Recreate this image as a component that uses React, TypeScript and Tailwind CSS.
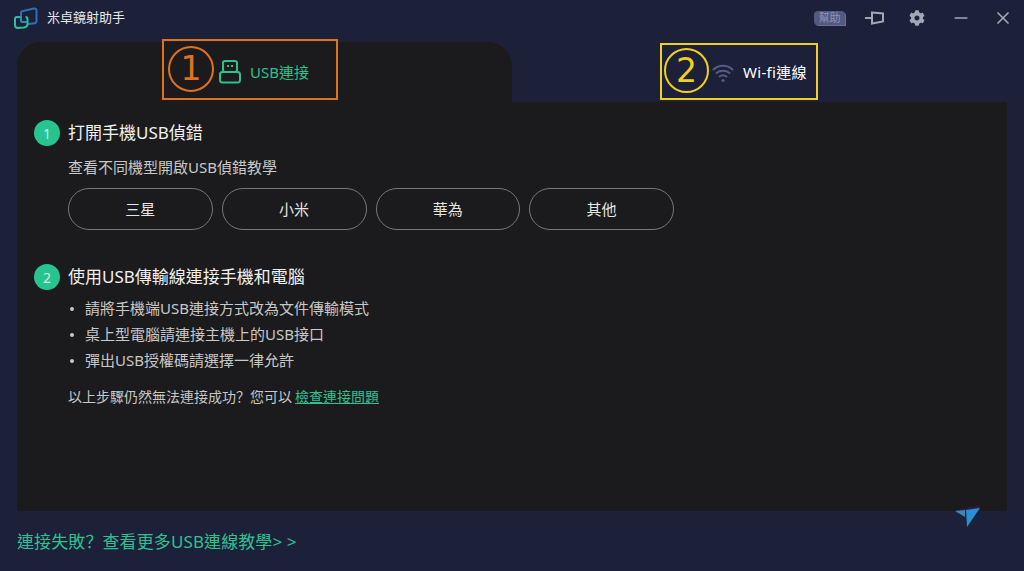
import React from 'react'
import { Minus, X } from 'lucide-react'
import { FaCog } from 'react-icons/fa'

const font = { fontFamily: '"Noto Sans", "Noto Sans CJK TC", sans-serif' }

const brands = ['三星', '小米', '華為', '其他']
const tips = ['請將手機端USB連接方式改為文件傳輸模式', '桌上型電腦請連接主機上的USB接口', '彈出USB授權碼請選擇一律允許']

const StepBadge = ({ n }: { n: number }) => (
  <span className="flex h-[26px] w-[26px] shrink-0 items-center justify-center rounded-full bg-[#27c48f] text-[14px] text-[#cfeee2]">
    {n}
  </span>
)

const Logo = () => (
  <svg width="26" height="22" viewBox="0 0 26 22" fill="none" strokeWidth="2">
    <path d="M8 9V5.5Q8 4.5 9 4.3L21 1.5Q23.5 1.2 23.5 3.5V14Q23.5 16 21.5 16.2L15 17" stroke="#2f6fb8" />
    <path d="M7 10H4Q2 10 2 12V18Q2 21 5 21L11 20.5Q14.5 20 14.5 17V12Q14.5 10 12.5 10" stroke="#2bc0a0" />
    <path d="M8 9V13.5Q8 15 9.5 15H14" stroke="#2b90b0" />
  </svg>
)

const UsbIcon = () => (
  <svg width="22" height="24" viewBox="0 0 22 24" fill="none" stroke="#2fc08e" strokeWidth="2">
    <rect x="4" y="1" width="14" height="11" rx="2" />
    <rect x="1" y="12" width="20" height="10.5" rx="2.5" />
    <path d="M8 6h2M12 6h2" />
  </svg>
)

const WifiIcon = () => (
  <svg width="22" height="22" viewBox="0 0 22 22" fill="none" stroke="#555c85" strokeWidth="2" strokeLinecap="round">
    <path d="M1.5 7.5C7 2.5 15 2.5 20.5 7.5" />
    <path d="M4.5 11C8 8 14 8 17.5 11" />
    <path d="M7.5 14.5C9.5 13 12.5 13 14.5 14.5" />
    <circle cx="11" cy="18.5" r="1.6" fill="#555c85" stroke="none" />
  </svg>
)

const PinIcon = () => (
  <svg width="19" height="14" viewBox="0 0 19 14" fill="none" stroke="#a3a6b4" strokeWidth="2">
    <path d="M0 7h7M7 1.5L18 2.5V10.5L7 12.5z" />
  </svg>
)

const HelpBubble = () => (
  <span className="mr-[20px] flex h-[14px] w-[31px] items-center justify-center rounded-[4px] rounded-br-none bg-[#535a80] text-[11px] text-[#8d93b3] shadow-[1px_1px_0_#6a7096]">
    幫助
  </span>
)

const PlaneMark = () => (
  <svg className="absolute right-[40px] bottom-[41px]" width="30" height="24" viewBox="0 0 30 24">
    <path d="M2 6 L26 1" stroke="#3b1a6e" strokeWidth="3" opacity="0.6" />
    <path d="M1 5 L11 4 L11 11z" fill="#3f86b5" />
    <path d="M12 4 L26 2 L13 21z" fill="#2a8fd0" />
  </svg>
)

export default function App() {
  return (
    <div className="relative flex h-[571px] w-[1024px] flex-col overflow-hidden bg-[#1c2139] text-[#e6e6e6]" style={font}>
      {/* title bar */}
      <header className="flex h-[42px] shrink-0 items-start justify-between pl-[13px] pr-[11px] pt-[7px]">
        <div className="flex items-center gap-[8px]">
          <Logo />
          <span className="text-[13px] text-[#e8e8ec]">米卓鏡射助手</span>
        </div>
        <div className="flex items-center pt-[1px]">
          <HelpBubble />
          <span className="mr-[25px] flex"><PinIcon /></span>
          <FaCog size={16} color="#a3a6b4" className="mr-[26px]" />
          <Minus size={20} color="#a3a6b4" className="mr-[22px]" />
          <X size={20} color="#a3a6b4" />
        </div>
      </header>

      {/* tabs */}
      <div className="ml-[17px] flex h-[60px] w-[990px] shrink-0">
        <div className="relative flex w-[495px] items-center rounded-t-[24px] bg-[#1b1b1d] pl-[202px]">
          <UsbIcon />
          <span className="ml-[9px] text-[15px] text-[#2fc08e]">USB連接</span>
          <div className="absolute top-[-3px] left-[145px] h-[61px] w-[176px] border-2 border-[#e2711d]" />
          <div className="absolute top-[4px] left-[151px] flex h-[46px] w-[46px] items-center justify-center rounded-full border-2 border-[#e2711d] font-['DejaVu_Sans'] text-[33px] text-[#e2711d]">
            1
          </div>
        </div>
        <div className="relative flex flex-1 items-center pl-[200px] pt-[1px]">
          <WifiIcon />
          <span className="ml-[9px] text-[15px] tracking-[0.3px] text-white">Wi-fi連線</span>
          <div className="absolute top-[1px] left-[148px] h-[57px] w-[158px] border-2 border-[#f0d020]" />
          <div className="absolute top-[6px] left-[152px] flex h-[45px] w-[45px] items-center justify-center rounded-full border-2 border-[#f0d020] font-['DejaVu_Sans'] text-[33px] text-[#f0d020]">
            2
          </div>
        </div>
      </div>

      {/* panel */}
      <main className="ml-[17px] h-[409px] w-[990px] shrink-0 bg-[#1b1b1d] pl-[17px] pt-[17px]">
        <section className="flex items-center gap-[8px]">
          <StepBadge n={1} />
          <h2 className="text-[17px] leading-[28px] text-[#f0f0f0]">打開手機USB偵錯</h2>
        </section>
        <p className="mt-[10px] ml-[34px] text-[15px] leading-[20px] text-[#c8c8c8]">查看不同機型開啟USB偵錯教學</p>
        <div className="mt-[11px] ml-[34px] flex gap-[9px]">
          {brands.map((b) => (
            <button
              key={b}
              className="h-[42px] w-[144.75px] rounded-full border border-[#77777a] text-[15px] text-[#e6e6e6]"
            >
              {b}
            </button>
          ))}
        </div>

        <section className="mt-[34px] flex items-center gap-[8px]">
          <StepBadge n={2} />
          <h2 className="text-[17px] leading-[26px] text-[#f0f0f0]">使用USB傳輸線連接手機和電腦</h2>
        </section>
        <ul className="mt-[8px] ml-[34px] flex flex-col gap-[5px] text-[15px] leading-[21px] text-[#c8c8c8]">
          {tips.map((t) => (
            <li key={t} className="flex items-center">
              <span className="mr-[11px] ml-[2px] h-[4px] w-[4px] rounded-full bg-[#c8c8c8]" />
              {t}
            </li>
          ))}
        </ul>
        <p className="mt-[15px] ml-[34px] text-[14px] leading-[20px] text-[#c8c8c8]">
          以上步驟仍然無法連接成功<span className="font-['Noto_Sans_CJK_SC']">？</span>您可以<a className="ml-[3px] text-[#2fc08e] underline">檢查連接問題</a>
        </p>
      </main>

      {/* footer */}
      <footer className="ml-[17px] flex flex-1 items-center pt-[1px]">
        <span className="text-[17px] tracking-[0.1px] text-[#2fc08e]">
          連接失敗<span className="font-['Noto_Sans_CJK_SC']">？</span>查看更多USB連線教學&gt; &gt;
        </span>
      </footer>
      <PlaneMark />
    </div>
  )
}
